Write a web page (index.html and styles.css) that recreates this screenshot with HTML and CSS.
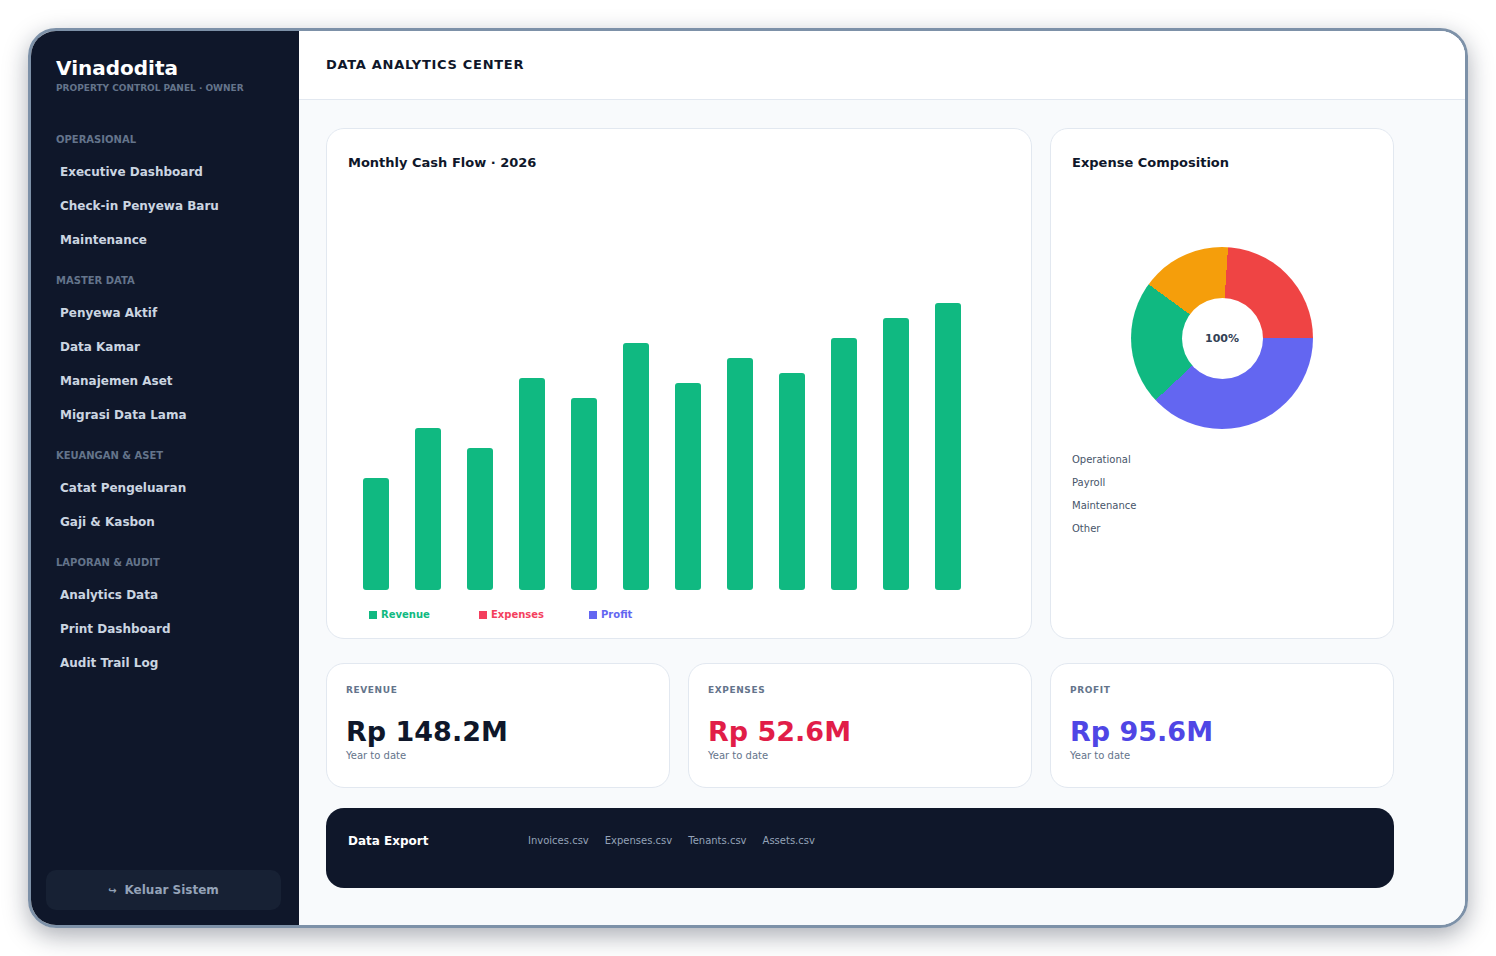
FILE: index.html
```html
<!DOCTYPE html>
<html lang="id">
<head>
    <meta charset="UTF-8">
    <meta name="viewport" content="width=device-width, initial-scale=1.0">
    <title>Data Analytics Center</title>
    <link rel="stylesheet" href="styles.css">
</head>
<body>

<div class="frame">
    <aside class="sidebar">
        <div class="brand">
            <div class="brand-name">Vinadodita</div>
            <div class="brand-sub">PROPERTY CONTROL PANEL · OWNER</div>
        </div>

        <nav class="nav">
            <div class="nav-section">
                <div class="nav-label">OPERASIONAL</div>
                <a class="nav-item">Executive Dashboard</a>
                <a class="nav-item">Check-in Penyewa Baru</a>
                <a class="nav-item">Maintenance</a>
            </div>
            <div class="nav-section">
                <div class="nav-label">MASTER DATA</div>
                <a class="nav-item">Penyewa Aktif</a>
                <a class="nav-item">Data Kamar</a>
                <a class="nav-item">Manajemen Aset</a>
                <a class="nav-item">Migrasi Data Lama</a>
            </div>
            <div class="nav-section">
                <div class="nav-label">KEUANGAN &amp; ASET</div>
                <a class="nav-item">Catat Pengeluaran</a>
                <a class="nav-item">Gaji &amp; Kasbon</a>
            </div>
            <div class="nav-section">
                <div class="nav-label">LAPORAN &amp; AUDIT</div>
                <a class="nav-item">Analytics Data</a>
                <a class="nav-item">Print Dashboard</a>
                <a class="nav-item">Audit Trail Log</a>
            </div>
        </nav>

        <button class="logout"><span class="logout-icon">↪</span>Keluar Sistem</button>
    </aside>

    <main class="main">
        <header class="topbar">
            <h1>DATA ANALYTICS CENTER</h1>
        </header>

        <div class="content">
            <div class="grid">
                <section class="card chart-card">
                    <h2 class="card-title">Monthly Cash Flow · 2026</h2>
                    <div class="plot">
                        <div class="bar" style="height: 112px"></div>
                        <div class="bar" style="height: 162px"></div>
                        <div class="bar" style="height: 142px"></div>
                        <div class="bar" style="height: 212px"></div>
                        <div class="bar" style="height: 192px"></div>
                        <div class="bar" style="height: 247px"></div>
                        <div class="bar" style="height: 207px"></div>
                        <div class="bar" style="height: 232px"></div>
                        <div class="bar" style="height: 217px"></div>
                        <div class="bar" style="height: 252px"></div>
                        <div class="bar" style="height: 272px"></div>
                        <div class="bar" style="height: 287px"></div>
                    </div>
                    <div class="legend">
                        <span class="legend-item revenue"><i class="swatch"></i>Revenue</span>
                        <span class="legend-item expenses"><i class="swatch"></i>Expenses</span>
                        <span class="legend-item profit"><i class="swatch"></i>Profit</span>
                    </div>
                </section>

                <section class="card pie-card">
                    <h2 class="card-title">Expense Composition</h2>
                    <div class="donut">
                        <div class="donut-hole">100%</div>
                    </div>
                    <ul class="pie-legend">
                        <li>Operational</li>
                        <li>Payroll</li>
                        <li>Maintenance</li>
                        <li>Other</li>
                    </ul>
                </section>

                <div class="card stat">
                    <div class="stat-label">REVENUE</div>
                    <div class="stat-value">Rp 148.2M</div>
                    <div class="stat-sub">Year to date</div>
                </div>
                <div class="card stat">
                    <div class="stat-label">EXPENSES</div>
                    <div class="stat-value red">Rp 52.6M</div>
                    <div class="stat-sub">Year to date</div>
                </div>
                <div class="card stat">
                    <div class="stat-label">PROFIT</div>
                    <div class="stat-value blue">Rp 95.6M</div>
                    <div class="stat-sub">Year to date</div>
                </div>
            </div>

            <div class="export">
                <div class="export-title">Data Export</div>
                <div class="export-files">
                    <a>Invoices.csv</a>
                    <a>Expenses.csv</a>
                    <a>Tenants.csv</a>
                    <a>Assets.csv</a>
                </div>
            </div>
        </div>
    </main>
</div>

</body>
</html>
```

FILE: styles.css
```css
body {
    margin: 0;
    background: #ffffff;
    font-family: "DejaVu Sans", Verdana, sans-serif;
}
.frame {
    width: 1440px;
    height: 900px;
    margin: 28px;
    box-sizing: border-box;
    border: 3px solid #7d91a8;
    border-radius: 28px;
    overflow: hidden;
    display: flex;
    box-shadow: 0 8px 24px rgba(15, 23, 42, 0.35);
}

/* sidebar */
.sidebar {
    width: 268px;
    flex-shrink: 0;
    box-sizing: border-box;
    padding: 25px 18px 15px 15px;
    background: #0f172a;
    display: flex;
    flex-direction: column;
}
.brand {
    padding-left: 10px;
}
.brand-name {
    font-size: 20px;
    line-height: 24px;
    font-weight: bold;
    color: #ffffff;
}
.brand-sub {
    margin-top: 2px;
    font-size: 9px;
    line-height: 12px;
    font-weight: bold;
    color: #64748b;
}
.nav {
    margin-top: 40px;
}
.nav-section + .nav-section {
    margin-top: 18px;
}
.nav-label {
    padding-left: 10px;
    margin-bottom: 9px;
    font-size: 10px;
    line-height: 12px;
    font-weight: bold;
    color: #64748b;
}
.nav-item {
    display: block;
    padding: 9px 14px;
    font-size: 12px;
    line-height: 16px;
    font-weight: bold;
    color: #cbd5e1;
    border-radius: 8px;
    cursor: pointer;
}
.logout {
    margin-top: auto;
    width: 100%;
    height: 40px;
    border: none;
    border-radius: 10px;
    background: #172134;
    color: #94a3b8;
    font-family: inherit;
    font-size: 12px;
    font-weight: bold;
    cursor: pointer;
}
.logout-icon {
    font-size: 10px;
    margin-right: 8px;
}

/* main */
.main {
    flex: 1;
    display: flex;
    flex-direction: column;
    background: #f8fafc;
}
.topbar {
    height: 69px;
    box-sizing: border-box;
    padding: 0 27px 2px;
    display: flex;
    align-items: center;
    background: #ffffff;
    border-bottom: 1px solid #e2e8f0;
}
.topbar h1 {
    margin: 0;
    font-size: 13px;
    letter-spacing: 0.7px;
    color: #0f172a;
}
.content {
    padding: 28px 27px;
}
.grid {
    display: grid;
    grid-template-columns: repeat(3, 344px);
    grid-template-rows: 511px 125px;
    column-gap: 18px;
    row-gap: 24px;
}
.card {
    background: #ffffff;
    border: 1px solid #e2e8f0;
    border-radius: 18px;
    box-sizing: border-box;
}
.card-title {
    margin: 0;
    font-size: 13px;
    line-height: 18px;
    color: #0f172a;
}

/* cash flow chart */
.chart-card {
    grid-column: span 2;
    padding: 25px 21px 17px;
    display: flex;
    flex-direction: column;
}
.plot {
    flex: 1;
    display: flex;
    align-items: flex-end;
    gap: 26px;
    padding-left: 15px;
}
.bar {
    width: 26px;
    background: #10b981;
    border-radius: 3px;
}
.legend {
    margin-top: 19px;
    padding-left: 21px;
    display: flex;
}
.legend-item {
    width: 110px;
    display: flex;
    align-items: center;
    gap: 4px;
    font-size: 10px;
    line-height: 12px;
    font-weight: bold;
}
.swatch {
    width: 8px;
    height: 8px;
    background: currentColor;
}
.revenue { color: #10b981; }
.expenses { color: #f43f5e; }
.profit { color: #6366f1; }

/* expense donut */
.pie-card {
    padding: 25px 21px;
}
.donut {
    width: 182px;
    height: 182px;
    margin: 75px auto 0;
    border-radius: 50%;
    background: conic-gradient(from 3.8deg, #ef4444 0 24%, #6366f1 0 62%, #10b981 0 84%, #f59e0b 0 100%);
    display: flex;
    align-items: center;
    justify-content: center;
}
.donut-hole {
    width: 81px;
    height: 81px;
    border-radius: 50%;
    background: #ffffff;
    display: flex;
    align-items: center;
    justify-content: center;
    font-size: 11px;
    font-weight: bold;
    color: #334155;
}
.pie-legend {
    list-style: none;
    margin: 25px 0 0;
    padding: 0;
    display: flex;
    flex-direction: column;
    gap: 11px;
}
.pie-legend li {
    font-size: 10px;
    line-height: 12px;
    color: #475569;
}

/* stat cards */
.stat {
    padding: 20px 19px;
}
.stat-label {
    font-size: 9px;
    line-height: 12px;
    font-weight: bold;
    letter-spacing: 0.6px;
    color: #64748b;
}
.stat-value {
    margin-top: 20px;
    font-size: 27px;
    line-height: 32px;
    font-weight: bold;
    color: #0f172a;
}
.stat-value.red { color: #e11d48; }
.stat-value.blue { color: #4f46e5; }
.stat-sub {
    margin-top: 2px;
    font-size: 10px;
    line-height: 12px;
    color: #64748b;
}

/* export strip */
.export {
    margin-top: 20px;
    width: 1068px;
    height: 80px;
    box-sizing: border-box;
    padding: 25px 22px;
    border-radius: 18px;
    background: #0f172a;
    display: flex;
}
.export-title {
    width: 180px;
    font-size: 12px;
    line-height: 16px;
    font-weight: bold;
    color: #ffffff;
}
.export-files {
    display: flex;
    gap: 16px;
}
.export-files a {
    font-size: 10px;
    line-height: 16px;
    color: #94a3b8;
    cursor: pointer;
}
```
